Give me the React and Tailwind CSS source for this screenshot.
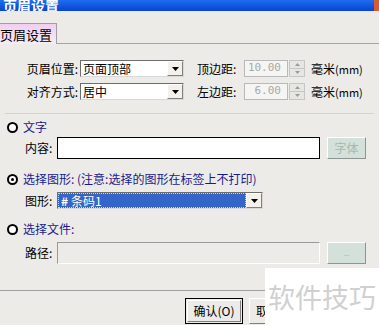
import React from 'react';

const font = { fontFamily: '"Noto Sans CJK SC", "Liberation Sans", sans-serif' };

function DropBtn() {
  return (
    <div className="w-[16px] h-full flex items-center justify-center bg-[#f3f1ea] border border-t-white border-l-white border-r-[#808080] border-b-[#808080] shrink-0">
      <svg width="7" height="4" viewBox="0 0 7 4"><path d="M0 0h7L3.5 4z" fill="#000" /></svg>
    </div>
  );
}

function Select({ value, className }) {
  return (
    <div className={`h-[17px] flex items-center bg-white border border-t-[#6d6d6d] border-l-[#6d6d6d] border-r-[#d8d8d8] border-b-[#d8d8d8] ${className}`}>
      <span className="flex-1 pl-[2px] text-[12px] leading-none text-black">{value}</span>
      <DropBtn />
    </div>
  );
}

function Spin({ value }) {
  return (
    <div className="flex items-center h-[17px]">
      <div className="w-[44px] h-full flex items-center justify-end pr-[6px] bg-[#f5f5f3] border border-[#b9b9b9] text-[11px] text-[#a8a8a8]" style={{ fontFamily: '"DejaVu Sans Mono", monospace' }}>
        {value}
      </div>
      <div className="w-[16px] h-full flex flex-col ml-[1px]">
        <div className="flex-1 flex items-center justify-center bg-[#e6e6e2] border border-[#c6c6c6]">
          <svg width="5" height="3" viewBox="0 0 5 3"><path d="M0 3h5L2.5 0z" fill="#9a9a9a" /></svg>
        </div>
        <div className="flex-1 flex items-center justify-center bg-[#e6e6e2] border border-t-0 border-[#c6c6c6]">
          <svg width="5" height="3" viewBox="0 0 5 3"><path d="M0 0h5L2.5 3z" fill="#9a9a9a" /></svg>
        </div>
      </div>
    </div>
  );
}

function Radio({ checked, label }) {
  return (
    <div className="flex items-center h-[14px] pl-[7px]">
      <div className="w-[11px] h-[11px] rounded-full border-2 border-black bg-white flex items-center justify-center">
        {checked && <div className="w-[3px] h-[3px] rounded-full bg-black" />}
      </div>
      <span className="ml-[5px] text-[12px] leading-none text-[#1a1a8c]">{label}</span>
    </div>
  );
}

function FlatBtn({ label, big }) {
  return (
    <div className={`w-[39px] h-[22px] flex items-center justify-center bg-[#d3e1da] border border-t-white border-l-white border-r-[#8e948f] border-b-[#8e948f] text-[#a9b6ae] ${big ? 'text-[12px]' : 'text-[8px]'}`}>
      {label}
    </div>
  );
}

export default function App() {
  return (
    <div className="w-[379px] h-[325px] bg-[#ecebe8] flex flex-col relative overflow-hidden" style={font}>
      <div className="h-[11px] shrink-0 bg-gradient-to-b from-[#1d6df0] to-[#0844d0] flex items-end overflow-hidden relative">
        <span className="ml-[3px] text-white font-bold text-[14px] leading-[14px] mb-[-1px]">页眉设置</span>
        <div className="absolute right-0 top-0 w-[5px] h-[11px] bg-[#e0592e]" />
      </div>

      {/* tabs */}
      <div className="flex mt-[12px] h-[21px] shrink-0">
        <div className="w-[57px] border-t border-r border-[#a0a0a0] bg-gradient-to-b from-[#f0cff0] to-[#f7ecf7] flex items-center text-[13px] leading-none text-black">
          页眉设置
        </div>
        <div className="flex-1 border-b border-[#a5a5a5]" />
      </div>

      {/* rows 1 & 2 */}
      <div className="flex flex-col gap-[6px] mt-[16px]">
        <div className="flex items-center">
          <span className="w-[80px] text-right pr-[2px] text-[12px] leading-none">页眉位置:</span>
          <Select value="页面顶部" className="w-[104px]" />
          <span className="ml-[13px] w-[47px] text-[12px] leading-none">顶边距:</span>
          <Spin value="10.00" />
          <span className="ml-[6px] text-[12px] leading-none">毫米<span className="text-[11px]">(mm)</span></span>
        </div>
        <div className="flex items-center">
          <span className="w-[80px] text-right pr-[2px] text-[12px] leading-none">对齐方式:</span>
          <Select value="居中" className="w-[104px]" />
          <span className="ml-[13px] w-[47px] text-[12px] leading-none">左边距:</span>
          <Spin value="6.00" />
          <span className="ml-[6px] text-[12px] leading-none">毫米<span className="text-[11px]">(mm)</span></span>
        </div>
      </div>

      <div className="mx-[5px] mt-[13px] h-[2px] border-t border-[#cbd5df] border-b-white shrink-0" />

      {/* text */}
      <div className="mt-[5px]"><Radio label="文字" /></div>
      <div className="flex items-center mt-[3px] h-[22px]">
        <span className="w-[57px] pl-[25px] text-[12px] leading-none">内容:</span>
        <div className="w-[263px] h-[22px] bg-white border border-black" />
        <div className="ml-[7px]"><FlatBtn label="字体" big /></div>
      </div>

      {/* graphic */}
      <div className="mt-[13px]">
        <Radio checked label="选择图形: (注意:选择的图形在标签上不打印)" />
      </div>
      <div className="flex items-center mt-[6px]">
        <span className="w-[57px] pl-[25px] text-[12px] leading-none">图形:</span>
        <div className="w-[206px] h-[17px] flex items-center bg-white border border-t-[#6d6d6d] border-l-[#6d6d6d] border-r-[#d8d8d8] border-b-[#d8d8d8]">
          <div className="flex-1 h-full bg-[#3366c8] border border-dotted border-[#c8d4f0] flex items-center pl-[2px] text-white text-[12px] leading-none">
            <span className="font-bold mr-[3px]">#</span>条码1
          </div>
          <DropBtn />
        </div>
      </div>

      {/* file */}
      <div className="mt-[13px]"><Radio label="选择文件:" /></div>
      <div className="flex items-center mt-[6px] h-[22px]">
        <span className="w-[57px] pl-[25px] text-[12px] leading-none">路径:</span>
        <div className="w-[263px] h-[22px] bg-[#ecebe8] border border-t-[#9a9a9a] border-l-[#9a9a9a] border-r-white border-b-white" />
        <div className="ml-[7px]"><FlatBtn label="..." /></div>
      </div>

      <div className="mt-[26px] h-[2px] border-t border-[#a0a0a0] border-b-white shrink-0" />

      {/* buttons */}
      <div className="flex mt-[6px] pl-[185px] gap-[6px]">
        <div className="w-[58px] h-[26px] border border-black flex items-center justify-center bg-[#ecebe8] text-[12px] leading-none">
          <div className="w-[54px] h-[22px] flex items-center justify-center border border-t-white border-l-white border-r-[#808080] border-b-[#808080]">确认(O)</div>
        </div>
        <div className="w-[58px] h-[26px] border border-t-white border-l-white border-r-[#808080] border-b-[#808080] flex items-center pl-[6px] bg-[#ecebe8] text-[12px] leading-none">
          取消
        </div>
      </div>

      {/* watermark */}
      <div className="absolute left-[265px] top-[268px] w-[114px] h-[57px] bg-white flex items-center justify-center text-[27px] text-[#d0d0d0] leading-none">
        软件技巧
      </div>
    </div>
  );
}
